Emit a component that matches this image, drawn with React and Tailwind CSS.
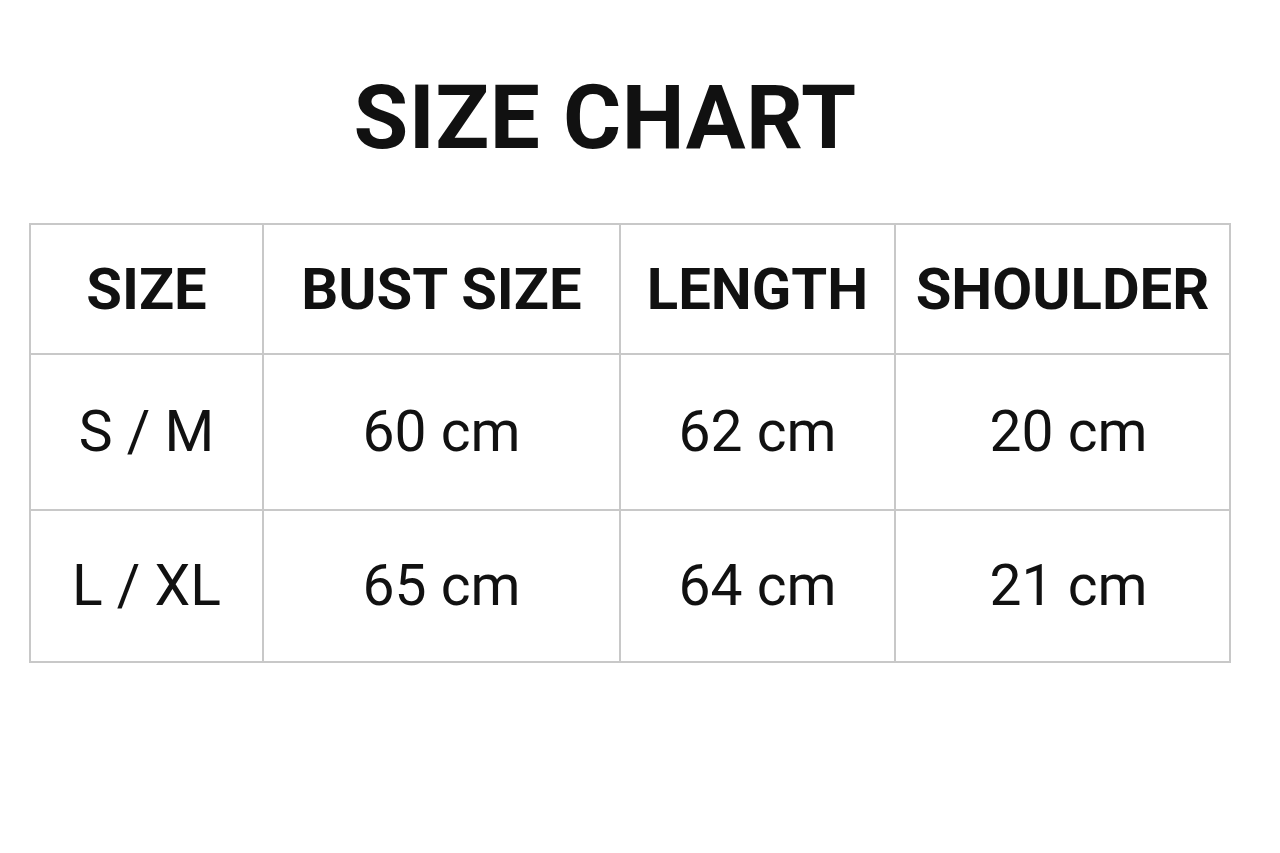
export default function App() {
  const rows = [
    ["S / M", "60 cm", "62 cm", "20 cm"],
    ["L / XL", "65 cm", "64 cm", "21 cm"],
  ];
  const headers = ["SIZE", "BUST SIZE", "LENGTH", "SHOULDER"];
  const widths = ["w-[233px]", "w-[357px]", "w-[275px]", "w-[335px]"];
  return (
    <div className="w-[1280px] h-[853px] bg-white text-[#111] font-['Roboto',sans-serif] flex flex-col">
      <div className="h-[223px] flex justify-center pr-[70px] pt-[70px]">
        <h1 className="text-[89px] leading-[96px] font-bold tracking-[0.5px]">SIZE CHART</h1>
      </div>
      <div className="pl-[29px]">
        <table className="border-collapse table-fixed w-[1202px]">
          <thead>
            <tr className="h-[130px]">
              {headers.map((h, i) => (
                <th key={h} className={`${widths[i]} border-2 border-[#c8c8c8] text-[58px] font-bold text-center align-middle p-0`}>
                  {h}
                </th>
              ))}
            </tr>
          </thead>
          <tbody>
            {rows.map((r, ri) => (
              <tr key={ri} className={ri === 0 ? "h-[156px]" : "h-[152px]"}>
                {r.map((c, ci) => (
                  <td key={ci} className={`border-2 border-[#c8c8c8] text-[57px] font-normal text-center align-middle p-0 ${ci === 3 ? "pl-[12px]" : ""}`}>
                    {c}
                  </td>
                ))}
              </tr>
            ))}
          </tbody>
        </table>
      </div>
    </div>
  );
}
